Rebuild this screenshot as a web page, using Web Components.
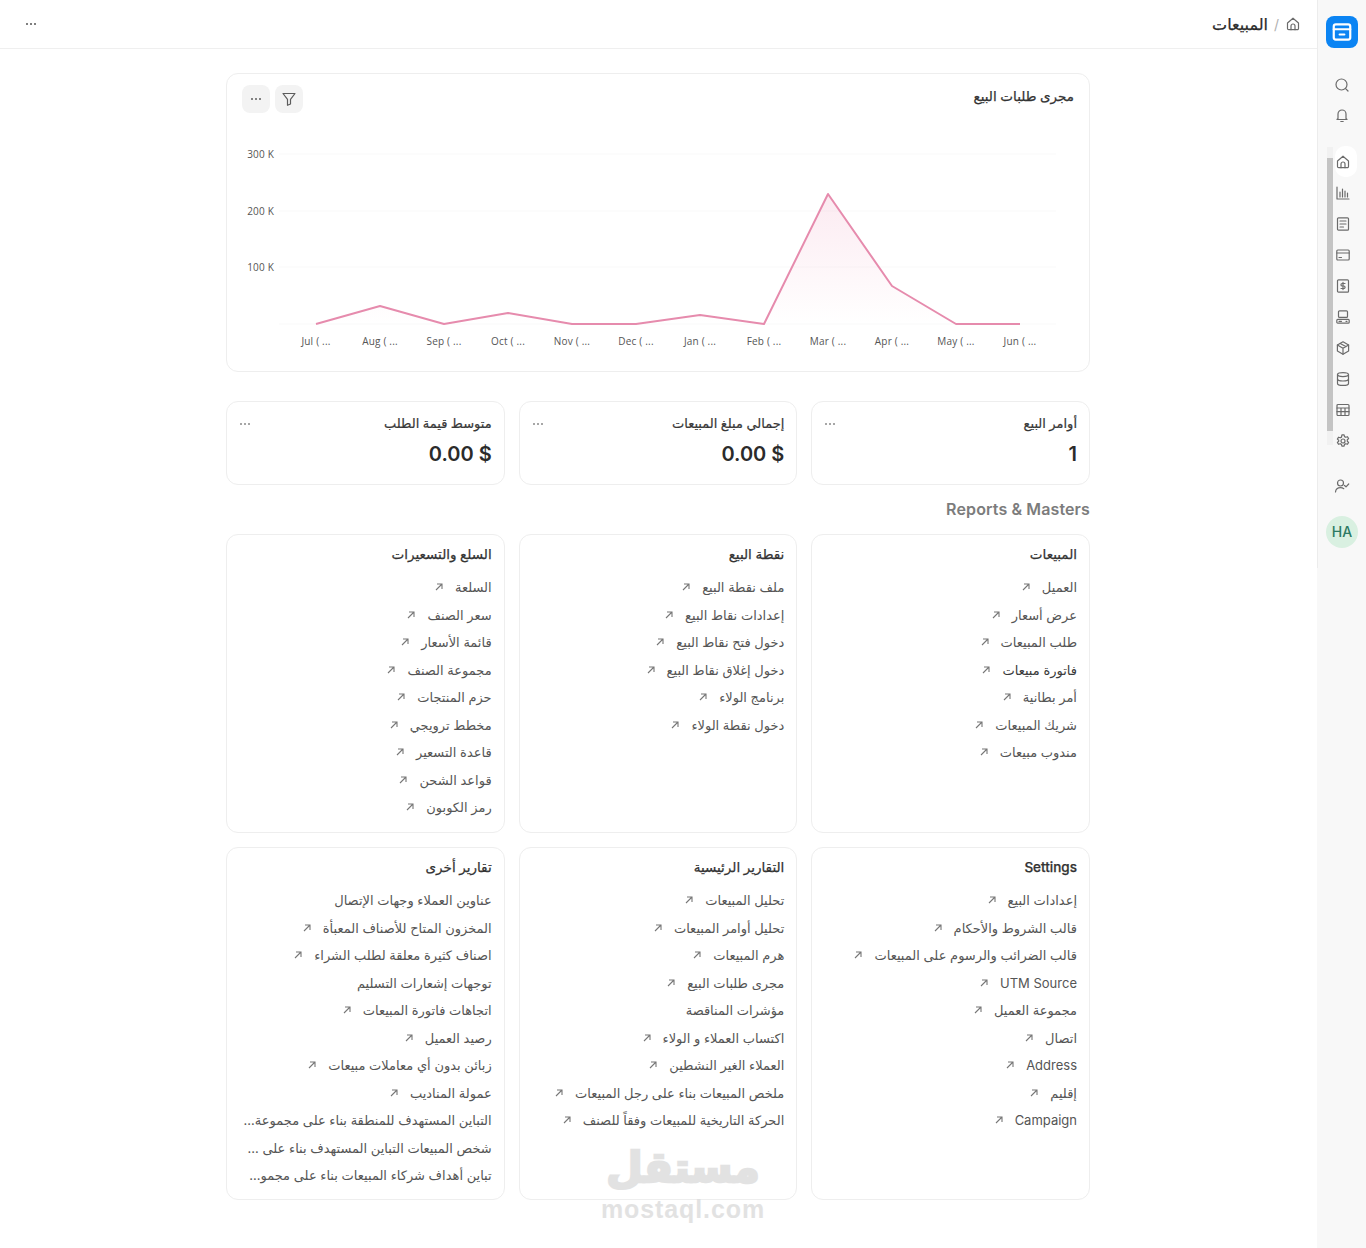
<!DOCTYPE html>
<html lang="ar" dir="rtl">
<head>
<meta charset="utf-8">
<title>المبيعات</title>
<style>
    html, body {
        margin: 0;
        height: 1248px;
        overflow: hidden;
        background: #fff;
        font-family: Inter, "Noto Sans", "DejaVu Sans", sans-serif;
    }
</style>
</head>
<body>
<app-shell>
    <side-rail slot="rail"></side-rail>
    <page-header slot="header" heading="المبيعات"></page-header>

    <sales-chart heading="مجرى طلبات البيع"></sales-chart>

    <stat-row>
        <stat-card label="أوامر البيع" value="1"></stat-card>
        <stat-card label="إجمالي مبلغ المبيعات" value="$ 0.00"></stat-card>
        <stat-card label="متوسط قيمة الطلب" value="$ 0.00"></stat-card>
    </stat-row>

    <section-title>Reports &amp; Masters</section-title>

    <card-grid>
        <link-card heading="المبيعات">
            <link-row>العميل</link-row>
            <link-row>عرض أسعار</link-row>
            <link-row>طلب المبيعات</link-row>
            <link-row strong>فاتورة مبيعات</link-row>
            <link-row>أمر بطانية</link-row>
            <link-row>شريك المبيعات</link-row>
            <link-row>مندوب مبيعات</link-row>
        </link-card>
        <link-card heading="نقطة البيع">
            <link-row>ملف نقطة البيع</link-row>
            <link-row>إعدادات نقاط البيع</link-row>
            <link-row>دخول فتح نقاط البيع</link-row>
            <link-row>دخول إغلاق نقاط البيع</link-row>
            <link-row>برنامج الولاء</link-row>
            <link-row>دخول نقطة الولاء</link-row>
        </link-card>
        <link-card heading="السلع والتسعيرات">
            <link-row>السلعة</link-row>
            <link-row>سعر الصنف</link-row>
            <link-row>قائمة الأسعار</link-row>
            <link-row>مجموعة الصنف</link-row>
            <link-row>حزم المنتجات</link-row>
            <link-row>مخطط ترويجي</link-row>
            <link-row>قاعدة التسعير</link-row>
            <link-row>قواعد الشحن</link-row>
            <link-row>رمز الكوبون</link-row>
        </link-card>
        <link-card heading="Settings">
            <link-row>إعدادات البيع</link-row>
            <link-row>قالب الشروط والأحكام</link-row>
            <link-row>قالب الضرائب والرسوم على المبيعات</link-row>
            <link-row>UTM Source</link-row>
            <link-row>مجموعة العميل</link-row>
            <link-row>اتصال</link-row>
            <link-row>Address</link-row>
            <link-row>إقليم</link-row>
            <link-row>Campaign</link-row>
        </link-card>
        <link-card heading="التقارير الرئيسية">
            <link-row>تحليل المبيعات</link-row>
            <link-row>تحليل أوامر المبيعات</link-row>
            <link-row>هرم المبيعات</link-row>
            <link-row>مجرى طلبات البيع</link-row>
            <link-row plain>مؤشرات المناقصة</link-row>
            <link-row>اكتساب العملاء و الولاء</link-row>
            <link-row>العملاء الغير النشطين</link-row>
            <link-row>ملخص المبيعات بناء على رجل المبيعات</link-row>
            <link-row>الحركة التاريخية للمبيعات وفقاً للصنف</link-row>
        </link-card>
        <link-card heading="تقارير أخرى">
            <link-row plain>عناوين العملاء وجهات الإتصال</link-row>
            <link-row>المخزون المتاح للأصناف المعبأة</link-row>
            <link-row>اصناف كثيرة معلقة لطلب الشراء</link-row>
            <link-row plain>توجهات إشعارات التسليم</link-row>
            <link-row>اتجاهات فاتورة المبيعات</link-row>
            <link-row>رصيد العميل</link-row>
            <link-row>زبائن بدون أي معاملات مبيعات</link-row>
            <link-row>عمولة المناديب</link-row>
            <link-row plain>التباين المستهدف للمنطقة بناء على مجموعة...</link-row>
            <link-row plain>شخص المبيعات التباين المستهدف بناء على ...</link-row>
            <link-row plain>تباين أهداف شركاء المبيعات بناء على مجمو...</link-row>
        </link-card>
    </card-grid>

    <wm-stamp></wm-stamp>
</app-shell>

<script>
const stroke = 'fill="none" stroke="currentColor" stroke-width="1.2" stroke-linecap="round" stroke-linejoin="round"';
const icons = {
    search: '<circle cx="7.5" cy="7.5" r="5.5"/><path d="M11.6 11.6 14 14"/>',
    bell: '<path d="M4 11.5V7a4 4 0 0 1 8 0v4.5l1 1H3z"/><path d="M6.8 14.5h2.4"/>',
    home: '<path d="M2.5 7 8 2.2 13.5 7v5.5a1.2 1.2 0 0 1-1.2 1.2H3.7a1.2 1.2 0 0 1-1.2-1.2z"/><path d="M6 13.7V10a2 2 0 0 1 4 0v3.7"/>',
    chart: '<path d="M2 2v12h12"/><path d="M5 12V7M7.5 12V4M10 12V6M12.5 12V8"/>',
    doc: '<rect x="2.5" y="1.8" width="11" height="12.4" rx="1"/><path d="M5 5h6M5 8h6M5 11h3.5"/>',
    card: '<rect x="1.8" y="3" width="12.4" height="10" rx="1"/><path d="M1.8 6h12.4M4 10.5h2.5"/>',
    dollar: '<rect x="2.5" y="1.8" width="11" height="12.4" rx="1"/><path d="M10 5.5H7.2a1.25 1.25 0 0 0 0 2.5h1.6a1.25 1.25 0 0 1 0 2.5H6M8 4.4v7.2"/>',
    pos: '<rect x="3.5" y="1.8" width="9" height="6.6" rx="1"/><rect x="1.8" y="10.4" width="12.4" height="3.8" rx="1"/><path d="M4 12.3h2.5M11 12.3h1"/>',
    box: '<path d="M8 1.8 13.6 5v6L8 14.2 2.4 11V5z"/><path d="M2.4 5 8 8.2 13.6 5M8 8.2v6M5.2 3.4l5.6 3.2"/>',
    db: '<ellipse cx="8" cy="3.6" rx="5.5" ry="2"/><path d="M2.5 3.6v8.8c0 1.1 2.5 2 5.5 2s5.5-.9 5.5-2V3.6"/><path d="M2.5 8c0 1.1 2.5 2 5.5 2s5.5-.9 5.5-2"/>',
    table: '<rect x="2" y="2.5" width="12" height="11" rx="1"/><path d="M2 6h12M2 9.7h12M6 6v7.5M10 6v7.5"/>',
    gear: '<circle cx="8" cy="8" r="2"/><path d="M6.9 1.8h2.2l.4 1.8 1.3.7 1.7-.6 1.1 1.9-1.3 1.2v1.4l1.3 1.2-1.1 1.9-1.7-.6-1.3.7-.4 1.8H6.9l-.4-1.8-1.3-.7-1.7.6-1.1-1.9 1.3-1.2V7.3L2.4 6.1l1.1-1.9 1.7.6 1.3-.7z"/>',
    user: '<circle cx="6.5" cy="5" r="3"/><path d="M1.5 14c.3-2.8 2.3-4.3 5-4.3 1.3 0 2.4.3 3.3 1"/><path d="m10.5 7.5 1.5 1.3 2.7-2.8"/>',
    filter: '<path d="M2 2.5h12L9.5 8.3V13l-3 1.3V8.3z"/>'
};
const svgIcon = (name, size = 16) =>
    `<svg width="${size}" height="${size}" viewBox="0 0 16 16" ${stroke}>${icons[name]}</svg>`;
const dots = '<svg width="12" height="4" viewBox="0 0 12 4" fill="currentColor" style="display:block"><circle cx="2" cy="2" r="1"/><circle cx="6" cy="2" r="1"/><circle cx="10" cy="2" r="1"/></svg>';

class AppShell extends HTMLElement {
    constructor() {
        super();
        this.attachShadow({ mode: 'open' }).innerHTML = `
            <style>
                :host { display: flex; flex-direction: row; height: 1248px; position: relative; }
                .rail { flex: 0 0 49px; }
                .main { flex: 1; min-width: 0; }
                .body { padding-right: 1px; }
                .content {
                    width: 864px;
                    margin: 0 auto;
                    padding-top: 24px;
                    display: flex;
                    flex-direction: column;
                }
            </style>
            <div class="rail"><slot name="rail"></slot></div>
            <div class="main">
                <slot name="header"></slot>
                <div class="body"><div class="content"><slot></slot></div></div>
            </div>
        `;
    }
}

class SideRail extends HTMLElement {
    constructor() {
        super();
        const top = ['search', 'bell'];
        const nav = ['home', 'chart', 'doc', 'card', 'dollar', 'pos', 'box', 'db', 'table', 'gear'];
        const btn = n => `<div class="item ${n === 'home' ? 'on' : ''}">${svgIcon(n)}</div>`;
        this.attachShadow({ mode: 'open' }).innerHTML = `
            <style>
                :host {
                    display: block;
                    height: 1248px;
                    background: #f8f8f8;
                    color: #6b6b6b;
                    position: relative;
                }
                .line { position: absolute; top: 0; right: 48px; width: 1px; height: 568px; background: #ececec; }
                .wrap { display: flex; flex-direction: column; align-items: center; padding: 16px 8px 0 9px; }
                .logo {
                    width: 32px; height: 32px; border-radius: 8px; background: #0b84f3; color: #fff;
                    display: flex; align-items: center; justify-content: center;
                }
                .item { width: 28px; height: 31px; display: flex; align-items: center; justify-content: center; }
                .top { margin-top: 22px; }
                .top .item { height: 30px; }
                .scroll { margin-top: 17px; position: relative; width: 32px; }
                .nav { display: flex; flex-direction: column; align-items: flex-start; padding-left: 3px; margin-top: -1px; position: relative; }
                .on { background: #fff; border-radius: 10px; width: 22px; margin-left: 6px; justify-content: flex-start; }
                .track { position: absolute; left: 1px; top: 0; width: 6px; height: 298px; background: #f1f1f1; }
                .thumb { position: absolute; left: 1px; top: 11px; width: 6px; height: 273px; background: #c4c4c4; }
                .me { margin-top: 14px; }
                .avatar {
                    margin-top: 15px; width: 32px; height: 32px; border-radius: 50%;
                    background: #d9f0e1; color: #2c7a63; font: 500 14px/32px Inter, sans-serif; text-align: center;
                }
            </style>
            <div class="line"></div>
            <div class="wrap" dir="ltr">
                <div class="logo">
                    <svg width="22" height="22" viewBox="0 0 16 16" fill="none" stroke="currentColor" stroke-width="1.6" stroke-linejoin="round" stroke-linecap="round">
                        <rect x="2" y="2.5" width="12" height="11" rx="1.5"/>
                        <path d="M2 6h12M6.3 9.8h3.4"/>
                    </svg>
                </div>
                <div class="top">${top.map(btn).join('')}</div>
                <div class="scroll">
                    <div class="track"></div><div class="thumb"></div>
                    <div class="nav">${nav.map(btn).join('')}</div>
                </div>
                <div class="item me">${svgIcon('user')}</div>
                <div class="avatar">HA</div>
            </div>
        `;
    }
}

class PageHeader extends HTMLElement {
    connectedCallback() {
        this.attachShadow({ mode: 'open' }).innerHTML = `
            <style>
                :host {
                    display: flex;
                    height: 48px;
                    align-items: center;
                    justify-content: space-between;
                    padding: 0 16px 0 25px;
                    border-bottom: 1px solid #efefef;
                }
                .crumb { display: flex; align-items: center; gap: 6px; color: #6b6b6b; }
                .sep { color: #b0b0b0; font-size: 14px; }
                h1 { margin: 0; font-size: 16px; font-weight: 500; color: #2b2b2b; -webkit-text-stroke: .25px #2b2b2b; }
                svg { display: block; }
                .dots { color: #555; margin-top: -1px; }
            </style>
            <div class="crumb">${svgIcon('home')}<span class="sep">/</span><h1>${this.getAttribute('heading')}</h1></div>
            <div class="dots">${dots}</div>
        `;
    }
}

class SalesChart extends HTMLElement {
    connectedCallback() {
        const months = ['Jul', 'Aug', 'Sep', 'Oct', 'Nov', 'Dec', 'Jan', 'Feb', 'Mar', 'Apr', 'May', 'Jun'];
        const ys = [324, 306, 324, 313, 324, 324, 315, 324, 194, 286, 324, 324];
        const pts = ys.map((y, i) => `${316 + 64 * i},${y}`).join(' ');
        const grid = [[154, '300 K'], [211, '200 K'], [267, '100 K'], [324, '']];
        this.attachShadow({ mode: 'open' }).innerHTML = `
            <style>
                :host {
                    display: block;
                    height: 299px;
                    box-sizing: border-box;
                    border: 1px solid #eeeeee;
                    border-radius: 12px;
                    position: relative;
                }
                .head {
                    height: 51px; box-sizing: border-box; padding: 11px 15px 0;
                    display: flex; justify-content: space-between; align-items: flex-start;
                }
                h2 { margin: 0; font-size: 13.5px; line-height: 22px; font-weight: 500; color: #333; -webkit-text-stroke: .25px #333; }
                .tools { display: flex; gap: 5px; direction: ltr; }
                .tool {
                    width: 28px; height: 28px; border-radius: 8px; background: #f3f3f3; color: #5c5c5c;
                    display: flex; align-items: center; justify-content: center;
                }
                svg.plot { display: block; direction: ltr; }
                .axis { font: 10px "Open Sans", sans-serif; fill: #555; direction: ltr; letter-spacing: .2px; }
            </style>
            <div class="head">
                <h2>${this.getAttribute('heading')}</h2>
                <div class="tools">
                    <div class="tool">${dots}</div>
                    <div class="tool">${svgIcon('filter')}</div>
                </div>
            </div>
            <svg class="plot" width="862" height="245" viewBox="227 125 862 245">
                <defs>
                    <linearGradient id="fade" x1="0" y1="0" x2="0" y2="1">
                        <stop offset="0" stop-color="#ec7fa8" stop-opacity=".16"/>
                        <stop offset="1" stop-color="#ec7fa8" stop-opacity="0"/>
                    </linearGradient>
                </defs>
                ${grid.map(([y, t]) => `
                    <line x1="279" x2="1056" y1="${y}" y2="${y}" stroke="#f9f9f9"/>
                    <text class="axis" x="274" y="${y + 4}" text-anchor="end">${t}</text>`).join('')}
                <polygon points="316,324 ${pts} 1020,324" fill="url(#fade)"/>
                <polyline points="${pts}" fill="none" stroke="#e68bad" stroke-width="2" stroke-linejoin="round"/>
                ${months.map((m, i) => `<text class="axis" x="${316 + 64 * i}" y="345" text-anchor="middle">${m} ( ...</text>`).join('')}
            </svg>
        `;
    }
}

class StatRow extends HTMLElement {
    constructor() {
        super();
        this.attachShadow({ mode: 'open' }).innerHTML = `
            <style>:host { display: grid; grid-template-columns: repeat(3, 1fr); gap: 14px; margin-top: 29px; }</style>
            <slot></slot>
        `;
    }
}

class StatCard extends HTMLElement {
    connectedCallback() {
        this.attachShadow({ mode: 'open' }).innerHTML = `
            <style>
                :host {
                    display: block;
                    height: 84px;
                    box-sizing: border-box;
                    border: 1px solid #eeeeee;
                    border-radius: 12px;
                    padding: 11px 12px 0;
                }
                .top { display: flex; justify-content: space-between; align-items: center; height: 20px; }
                .label { font-size: 13px; font-weight: 500; color: #383838; -webkit-text-stroke: .2px #383838; }
                .dots { color: #8a8a8a; margin-top: 1px; }
                .value { margin-top: 9px; font-size: 20px; line-height: 24px; font-weight: 600; color: #2b2b2b; }
            </style>
            <div class="top"><span class="label">${this.getAttribute('label')}</span><span class="dots">${dots}</span></div>
            <div class="value">${this.getAttribute('value')}</div>
        `;
    }
}

class SectionTitle extends HTMLElement {
    constructor() {
        super();
        this.attachShadow({ mode: 'open' }).innerHTML = `
            <style>
                :host {
                    display: block;
                    margin: 14px 0;
                    height: 21px;
                    font-size: 16px;
                    line-height: 21px;
                    font-weight: 600;
                    letter-spacing: .12px;
                    color: #7c7c7c;
                    direction: ltr;
                    text-align: right;
                }
            </style>
            <slot></slot>
        `;
    }
}

class CardGrid extends HTMLElement {
    constructor() {
        super();
        this.attachShadow({ mode: 'open' }).innerHTML = `
            <style>:host { display: grid; grid-template-columns: repeat(3, 1fr); grid-template-rows: 299px 353px; gap: 14px; }</style>
            <slot></slot>
        `;
    }
}

class LinkCard extends HTMLElement {
    connectedCallback() {
        this.attachShadow({ mode: 'open' }).innerHTML = `
            <style>
                :host {
                    display: block;
                    box-sizing: border-box;
                    border: 1px solid #eeeeee;
                    border-radius: 12px;
                    padding: 9px 12px 0;
                }
                h3 { margin: 0 0 9.6px; font-size: 13.5px; line-height: 20px; font-weight: 500; color: #333; -webkit-text-stroke: .25px #333; }
            </style>
            <h3>${this.getAttribute('heading')}</h3>
            <slot></slot>
        `;
    }
}

class LinkRow extends HTMLElement {
    connectedCallback() {
        const arrow = this.hasAttribute('plain') ? '' :
            `<svg width="14" height="14" viewBox="0 0 14 14" fill="none" stroke="currentColor" stroke-width="1.1"><path d="M4 10 10 4M5 4h5v5"/></svg>`;
        this.attachShadow({ mode: 'open' }).innerHTML = `
            <style>
                :host {
                    display: flex;
                    align-items: center;
                    gap: 9px;
                    height: 27.5px;
                    font-size: 13px;
                    color: ${this.hasAttribute('strong') ? '#3a3a3a' : '#555'};
                    white-space: nowrap;
                }
                svg { color: #777; display: block; }
            </style>
            <slot></slot>${arrow}
        `;
    }
}

class WmStamp extends HTMLElement {
    constructor() {
        super();
        this.attachShadow({ mode: 'open' }).innerHTML = `
            <style>
                :host {
                    position: absolute;
                    left: 583px;
                    top: 1140px;
                    width: 200px;
                    text-align: center;
                    pointer-events: none;
                    color: #dcdcdc;
                    opacity: .8;
                    font-family: "DejaVu Sans", sans-serif;
                    font-weight: 700;
                }
                .ar { font-size: 42px; line-height: 56px; -webkit-text-stroke: 2.5px #dcdcdc; }
                .en { direction: ltr; margin-top: 3px; font: 700 25px/20px "Liberation Sans", sans-serif; letter-spacing: .9px; }
            </style>
            <div class="ar">مستقل</div>
            <div class="en">mostaql.com</div>
        `;
    }
}

customElements.define('app-shell', AppShell);
customElements.define('side-rail', SideRail);
customElements.define('page-header', PageHeader);
customElements.define('sales-chart', SalesChart);
customElements.define('stat-row', StatRow);
customElements.define('stat-card', StatCard);
customElements.define('section-title', SectionTitle);
customElements.define('card-grid', CardGrid);
customElements.define('link-card', LinkCard);
customElements.define('link-row', LinkRow);
customElements.define('wm-stamp', WmStamp);
</script>
</body>
</html>
